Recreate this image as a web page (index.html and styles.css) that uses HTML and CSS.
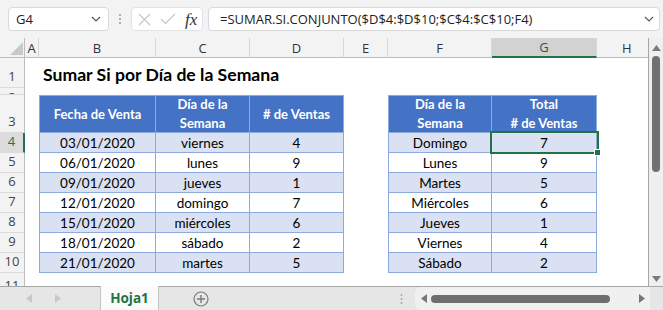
FILE: index.html
```html
<!DOCTYPE html>
<html lang="es">
<head>
<meta charset="utf-8">
<title>Sumar Si por Día de la Semana</title>
<link rel="stylesheet" href="styles.css">
</head>
<body>
<div class="app">
  <div class="fbar">
    <div class="namebox"><span>G4</span>
      <svg class="chev" width="10" height="6" viewBox="0 0 10 6"><path d="M1 1 L5 5 L9 1" fill="none" stroke="#555" stroke-width="1.1"/></svg>
    </div>
    <div class="grip"><svg width="4" height="12" viewBox="0 0 4 12"><circle cx="2" cy="2" r="1" fill="#9a9a9a"/><circle cx="2" cy="6" r="1" fill="#9a9a9a"/><circle cx="2" cy="10" r="1" fill="#9a9a9a"/></svg></div>
    <div class="fbtns">
      <svg class="xicon" width="13" height="13" viewBox="0 0 13 13"><path d="M1 1 L12 12 M12 1 L1 12" stroke="#c4c4c4" stroke-width="1.1" fill="none"/></svg>
      <svg class="okicon" width="16" height="12" viewBox="0 0 16 12"><path d="M1 6 L5.5 10.5 L15 1" stroke="#c4c4c4" stroke-width="1.1" fill="none"/></svg>
      <span class="fx">fx</span>
    </div>
    <div class="formula"><span>=SUMAR.SI.CONJUNTO($D$4:$D$10;$C$4:$C$10;F4)</span>
      <svg class="chev" width="10" height="6" viewBox="0 0 10 6"><path d="M1 1 L5 5 L9 1" fill="none" stroke="#555" stroke-width="1.1"/></svg>
    </div>
  </div>

  <div class="main">
    <div class="sheet">
      <!-- column headers -->
      <div class="corner"><svg width="25" height="20" viewBox="0 0 25 20"><polygon points="10,17 23,17 23,4" fill="#c9c9c9"/></svg></div>
      <div class="ch">A</div><div class="ch">B</div><div class="ch">C</div><div class="ch">D</div><div class="ch">E</div><div class="ch">F</div><div class="ch sel">G</div><div class="ch chh">H</div>

      <!-- row 1 -->
      <div class="rh">1</div><div></div><div class="title">Sumar Si por Día de la Semana</div><div></div><div></div><div></div>
      <!-- row 2 -->
      <div class="rh r2">2</div><div></div><div></div><div></div><div></div><div></div><div></div><div></div><div></div>
      <!-- row 3 -->
      <div class="rh">3</div><div></div>
      <div class="th first">Fecha de Venta</div><div class="th">Día de la<br>Semana</div><div class="th"># de Ventas</div>
      <div></div>
      <div class="th first">Día de la<br>Semana</div><div class="th">Total<br># de Ventas</div>
      <div></div>

      <!-- row 4 -->
      <div class="rh sel">4</div><div></div>
      <div class="td first s">03/01/2020</div><div class="td s">viernes</div><div class="td s">4</div><div></div>
      <div class="td first s">Domingo</div><div class="td s active">7</div><div></div>
      <!-- row 5 -->
      <div class="rh">5</div><div></div>
      <div class="td first">06/01/2020</div><div class="td">lunes</div><div class="td">9</div><div></div>
      <div class="td first">Lunes</div><div class="td">9</div><div></div>
      <!-- row 6 -->
      <div class="rh">6</div><div></div>
      <div class="td first s">09/01/2020</div><div class="td s">jueves</div><div class="td s">1</div><div></div>
      <div class="td first s">Martes</div><div class="td s">5</div><div></div>
      <!-- row 7 -->
      <div class="rh">7</div><div></div>
      <div class="td first">12/01/2020</div><div class="td">domingo</div><div class="td">7</div><div></div>
      <div class="td first">Miércoles</div><div class="td">6</div><div></div>
      <!-- row 8 -->
      <div class="rh">8</div><div></div>
      <div class="td first s">15/01/2020</div><div class="td s">miércoles</div><div class="td s">6</div><div></div>
      <div class="td first s">Jueves</div><div class="td s">1</div><div></div>
      <!-- row 9 -->
      <div class="rh">9</div><div></div>
      <div class="td first">18/01/2020</div><div class="td">sábado</div><div class="td">2</div><div></div>
      <div class="td first">Viernes</div><div class="td">4</div><div></div>
      <!-- row 10 -->
      <div class="rh">10</div><div></div>
      <div class="td first s">21/01/2020</div><div class="td s">martes</div><div class="td s">5</div><div></div>
      <div class="td first s">Sábado</div><div class="td s">2</div><div></div>
      <!-- row 11 -->
      <div class="rh r11">11</div><div></div><div></div><div></div><div></div><div></div><div></div><div></div><div></div>
    </div>
    <div class="vscroll">
      <svg class="arr" width="9" height="6" viewBox="0 0 9 6"><polygon points="0,6 9,6 4.5,0" fill="#7a7a7a"/></svg>
      <div class="vthumb"></div>
      <div class="vspace"></div>
      <svg class="arr" width="9" height="6" viewBox="0 0 9 6"><polygon points="0,0 9,0 4.5,6" fill="#7a7a7a"/></svg>
    </div>
  </div>

  <div class="bottom">
    <div class="nav">
      <svg width="6" height="9" viewBox="0 0 6 9"><polygon points="6,0 6,9 0,4.5" fill="#c8c8c8"/></svg>
      <svg width="6" height="9" viewBox="0 0 6 9"><polygon points="0,0 0,9 6,4.5" fill="#c8c8c8"/></svg>
    </div>
    <div class="tab">Hoja1</div>
    <div class="add"><svg width="16" height="16" viewBox="0 0 16 16"><circle cx="8" cy="8" r="7" fill="none" stroke="#7a7a7a" stroke-width="1.2"/><path d="M8 4 V12 M4 8 H12" stroke="#7a7a7a" stroke-width="1.4"/></svg></div>
    <div class="bspace"></div>
    <div class="hgrip"><svg width="3" height="12" viewBox="0 0 3 12"><circle cx="1.5" cy="2" r="1" fill="#a8a8a8"/><circle cx="1.5" cy="6" r="1" fill="#a8a8a8"/><circle cx="1.5" cy="10" r="1" fill="#a8a8a8"/></svg></div>
    <div class="hscroll">
      <svg width="6" height="9" viewBox="0 0 6 9"><polygon points="6,0 6,9 0,4.5" fill="#777"/></svg>
      <div class="hthumb"></div>
      <svg width="6" height="9" viewBox="0 0 6 9"><polygon points="0,0 0,9 6,4.5" fill="#777"/></svg>
    </div>
  </div>
</div>
</body>
</html>
```

FILE: styles.css
```css
* { box-sizing: border-box; margin: 0; padding: 0; }
html, body { width: 663px; height: 310px; overflow: hidden; }
body { background: #f3f3f3; font-family: "Open Sans", "Noto Sans", sans-serif; }

.app { width: 663px; height: 310px; display: flex; flex-direction: column; }

/* formula bar */
.fbar { height: 38px; flex: none; display: flex; align-items: flex-start; padding: 7px 0 0 8px; }
.namebox { width: 101px; height: 24px; background: #fff; border: 1px solid #d9d9d9; border-radius: 4px;
  display: flex; align-items: center; justify-content: space-between; padding: 0 7px 0 7px;
  font-size: 13px; color: #222; }
.grip { width: 22px; height: 24px; display: flex; align-items: center; justify-content: center; }
.fbtns { width: 72px; height: 24px; background: #fff; border: 1px solid #e3e3e3; border-radius: 4px;
  display: flex; align-items: center; padding-left: 6px; }
.xicon { margin-right: 9px; }
.okicon { margin-right: 9px; }
.fx { font-family: "Liberation Serif", "DejaVu Serif", serif; font-style: italic; font-size: 17px; color: #333; line-height: 1; }
.formula { width: 452px; height: 24px; margin-left: 5px; background: #fff; border: 1px solid #d9d9d9; border-radius: 4px;
  display: flex; align-items: center; justify-content: space-between; padding: 0 5px 0 11px;
  font-size: 13px; color: #222; white-space: nowrap; }

/* main */
.main { height: 248px; flex: none; display: flex; }
.sheet { width: 648px; height: 248px; overflow: hidden; background: #fff;
  display: grid;
  grid-template-columns: 25px 14px 117px 94px 94px 44px 104px 105px 51px;
  grid-template-rows: 20px 30px 7px 38px repeat(7, 20px) 20px;
  font-family: "Lato", "Open Sans", sans-serif; font-size: 13px; color: #000; }

.corner { background: #f3f3f3; border-right: 1px solid #bdbdbd; border-bottom: 1px solid #bdbdbd; }
.corner svg { display: block; }
.ch { background: #f3f3f3; border-right: 1px solid #d6d6d6; border-bottom: 1px solid #bdbdbd;
  display: flex; align-items: center; justify-content: center;
  font-family: "Open Sans", "Noto Sans", sans-serif; font-size: 13px; color: #333; }
.ch.sel { background: #d2d2d2; color: #1d5e3a; border-bottom: 2px solid #217346; }
.ch.chh { justify-content: flex-start; padding-left: 25px; border-right: none; }

.rh { background: #f3f3f3; border-right: 1px solid #bdbdbd; border-bottom: 1px solid #dadada;
  display: flex; align-items: flex-end; justify-content: center; padding-bottom: 2px; overflow: hidden;
  font-family: "Open Sans", "Noto Sans", sans-serif; font-size: 13px; color: #444; line-height: 18px; }
.rh.sel { background: #dcdcdc; color: #217346; border-right: 2px solid #217346; }
.rh.r2 { padding-bottom: 0; align-items: flex-start; }
.rh.r11 { align-items: flex-start; padding-top: 3px; border-bottom: none; }

.title { grid-column: span 4; display: flex; align-items: flex-end; padding: 0 0 2px 4px;
  font-size: 17.6px; font-weight: 700; white-space: nowrap; line-height: 22px; }

.th { background: #4472c4; color: #fff; font-weight: 700; font-size: 13px; line-height: 19px; text-align: center;
  border-top: 1px solid #8ea9db; border-right: 1px solid #8ea9db; border-bottom: 1px solid #8ea9db;
  display: flex; align-items: center; justify-content: center; }
.td { border-right: 1px solid #8ea9db; border-bottom: 1px solid #8ea9db; font-size: 13.5px; line-height: 18px;
  display: flex; align-items: flex-end; justify-content: center; padding-bottom: 0; }
.first { border-left: 1px solid #8ea9db; }
.s { background: #d9e1f2; }
.active { position: relative; }
.active::before { content: ""; position: absolute; left: -2px; top: -2px; right: -3px; bottom: -2px; border: 2px solid #217346; }
.active::after { content: ""; position: absolute; right: -5px; bottom: -4px; width: 5px; height: 5px; background: #217346; border: 1px solid #fff; }

/* vertical scrollbar */
.vscroll { width: 15px; height: 248px; border-left: 1px solid #a6a6a6; background: #efefef;
  display: flex; flex-direction: column; align-items: center; padding: 7px 0 4px 0; }
.vscroll .arr { flex: none; }
.vthumb { width: 8px; height: 116px; margin-top: 5px; background: #717171; border-radius: 4px; }
.vspace { flex: 1; }

/* bottom bar */
.bottom { height: 24px; flex: none; border-top: 1px solid #a6a6a6; background: #e6e6e6; display: flex; align-items: stretch; }
.nav { width: 100px; display: flex; align-items: center; padding-left: 26px; gap: 23px; }
.tab { width: 59px; background: #fbfbfb; border-left: 1px solid #c4c4c4; border-right: 1px solid #c4c4c4; margin-top: -1px;
  display: flex; align-items: center; justify-content: center;
  font-family: "Open Sans", "Noto Sans", sans-serif; font-weight: 700; font-size: 13.5px; color: #217346; }
.add { width: 84px; display: flex; align-items: center; justify-content: center; }
.bspace { flex: 1; }
.hgrip { width: 16px; display: flex; align-items: center; justify-content: flex-start; padding-left: 1px; }
.hscroll { width: 235px; background: #f0f0f0; border-radius: 6px 0 0 6px; display: flex; align-items: center; padding: 0 5px 0 6px; margin-right: 13px; }
.hthumb { width: 179px; height: 8px; background: #6e6e6e; border-radius: 4px; margin: 0 auto 0 4px; }
```
